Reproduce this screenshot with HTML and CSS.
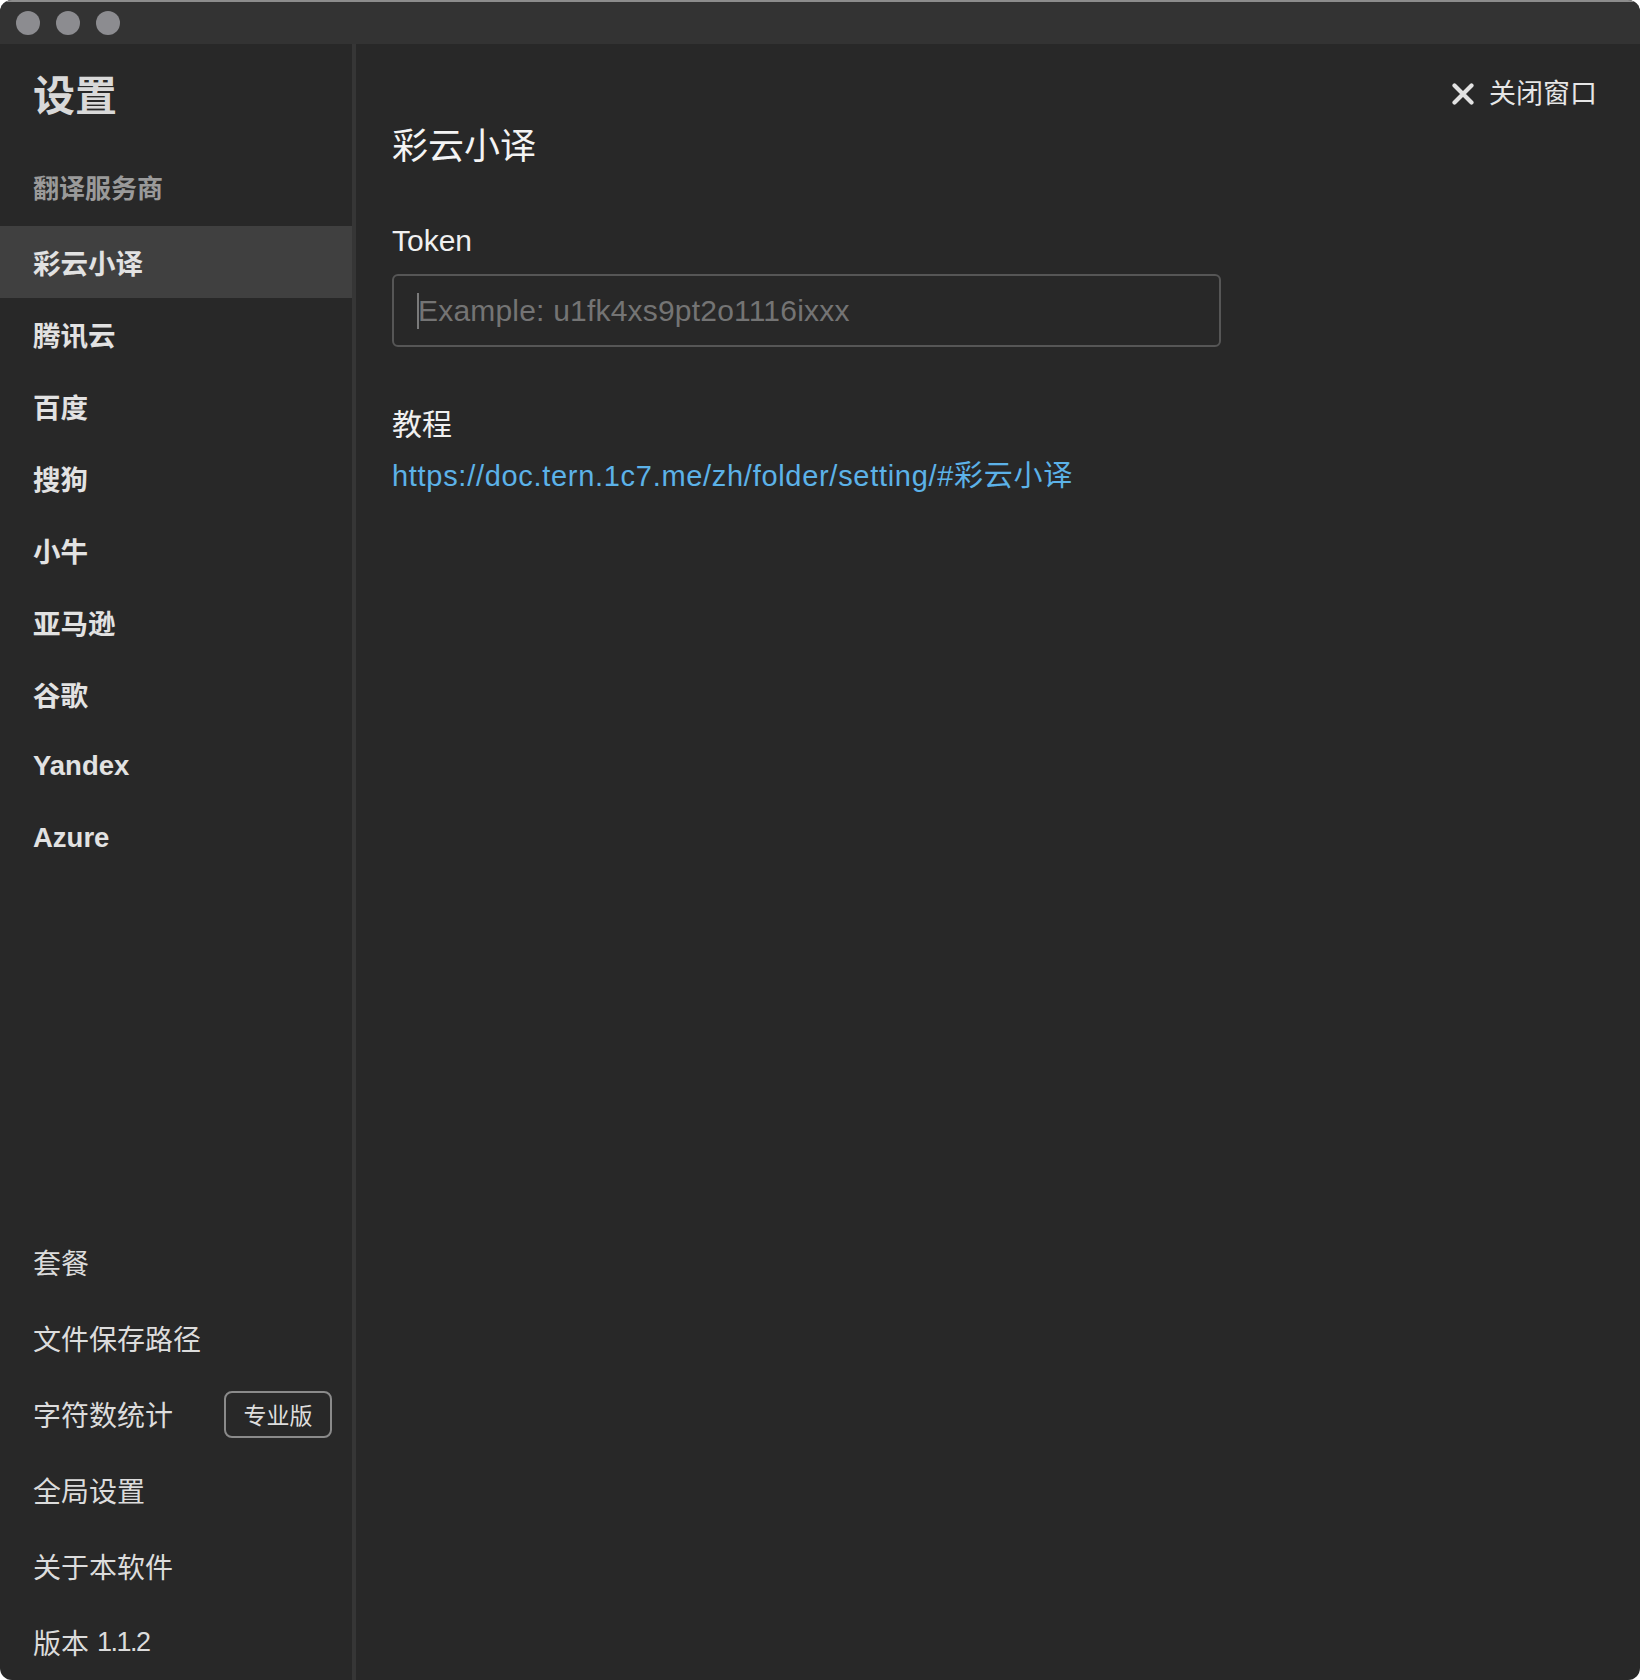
FILE: index.html
```html
<!DOCTYPE html>
<html lang="zh">
<head>
    <meta charset="UTF-8">
    <meta name="viewport" content="width=device-width, initial-scale=1.0">
    <title>设置</title>
    <link rel="stylesheet" href="styles.css">
</head>
<body>
    <div class="window">
        <!-- Title bar -->
        <div class="titlebar">
            <span class="light"></span>
            <span class="light"></span>
            <span class="light"></span>
        </div>

        <div class="body">
            <!-- Sidebar -->
            <aside class="sidebar">
                <h1>设置</h1>
                <div class="group-title">翻译服务商</div>
                <ul class="providers">
                    <li class="active">彩云小译</li>
                    <li>腾讯云</li>
                    <li>百度</li>
                    <li>搜狗</li>
                    <li>小牛</li>
                    <li>亚马逊</li>
                    <li>谷歌</li>
                    <li>Yandex</li>
                    <li>Azure</li>
                </ul>
                <ul class="extras">
                    <li>套餐</li>
                    <li>文件保存路径</li>
                    <li>字符数统计 <span class="badge">专业版</span></li>
                    <li>全局设置</li>
                    <li>关于本软件</li>
                    <li class="version">版本 <span class="num">1.1.2</span></li>
                </ul>
            </aside>

            <!-- Main panel -->
            <main class="main">
                <div class="close-row">
                    <button class="close">
                        <svg width="22" height="22" viewBox="0 0 22 22">
                            <path d="M2.5 2.5 L19.5 19.5 M19.5 2.5 L2.5 19.5" stroke="#e2e2e2" stroke-width="4.2" stroke-linecap="round"/>
                        </svg>
                        关闭窗口
                    </button>
                </div>
                <h2>彩云小译</h2>
                <label for="token">Token</label>
                <div class="field">
                    <input type="text" id="token" placeholder="Example: u1fk4xs9pt2o1116ixxx">
                </div>
                <div class="section-title">教程</div>
                <a class="link" href="#">https://doc.tern.1c7.me/zh/folder/setting/#彩云小译</a>
            </main>
        </div>
    </div>
</body>
</html>
```

FILE: styles.css
```css
body {
    margin: 0;
    padding: 0;
    background: #ffffff;
    font-family: 'Liberation Sans', 'Noto Sans CJK SC', sans-serif;
}

.window {
    width: 1640px;
    height: 1680px;
    border-radius: 12px;
    overflow: hidden;
    background: #282828;
    display: flex;
    flex-direction: column;
}

/* Title bar */
.titlebar {
    height: 44px;
    flex-shrink: 0;
    background: #333333;
    border-top: 2px solid #8c8c8c;
    box-sizing: border-box;
    display: flex;
    align-items: center;
    gap: 16px;
    padding-left: 16px;
}

.light {
    width: 24px;
    height: 24px;
    border-radius: 50%;
    background: #8c8c90;
}

.body {
    flex: 1;
    display: flex;
}

/* Sidebar */
.sidebar {
    width: 352px;
    border-right: 4px solid #363636;
    display: flex;
    flex-direction: column;
    color: #e4e4e4;
}

.sidebar h1 {
    margin: 32px 0 0 33px;
    font-size: 42px;
    line-height: 42px;
    font-weight: 700;
    color: #d9d9d9;
}

.group-title {
    margin: 58px 0 24px 33px;
    font-size: 26px;
    line-height: 26px;
    font-weight: 700;
    color: #9a9a9a;
}

.sidebar ul {
    list-style: none;
    margin: 0;
    padding: 0;
}

.providers li {
    height: 72px;
    display: flex;
    align-items: center;
    padding-left: 33px;
    font-size: 27.5px;
    font-weight: 700;
    color: #e2e2e2;
}

.providers li.active {
    background: #404040;
}

.extras {
    margin-top: auto !important;
}

.extras li {
    height: 76px;
    display: flex;
    align-items: center;
    padding: 0 20px 0 33px;
    font-size: 28px;
    color: #dcdcdc;
}

.extras li .num {
    margin-left: 8px;
    font-size: 27px;
    letter-spacing: -1.5px;
}

.badge {
    margin-left: auto;
    width: 108px;
    height: 47px;
    box-sizing: border-box;
    border: 2px solid #8a8a8a;
    border-radius: 8px;
    display: flex;
    align-items: center;
    justify-content: center;
    font-size: 23px;
    color: #dedede;
}

/* Main panel */
.main {
    flex: 1;
    padding: 0 43px 0 36px;
    display: flex;
    flex-direction: column;
    align-items: flex-start;
    color: #f2f2f2;
}

.close-row {
    align-self: stretch;
    display: flex;
    justify-content: flex-end;
    padding-top: 36px;
}

.close {
    background: none;
    border: none;
    padding: 0;
    display: flex;
    align-items: center;
    gap: 15px;
    font-family: inherit;
    font-size: 27px;
    line-height: 28px;
    color: #e6e6e6;
    cursor: pointer;
}

.main h2 {
    margin: 21px 0 0 0;
    font-size: 36px;
    line-height: 36px;
    font-weight: 400;
    color: #f4f4f4;
}

.main label {
    margin-top: 61px;
    font-size: 30px;
    line-height: 30px;
    color: #f0f0f0;
}

.field {
    position: relative;
    margin-top: 18px;
}

/* fake text caret */
.field::before {
    content: "";
    position: absolute;
    left: 25px;
    top: 19px;
    width: 2px;
    height: 36px;
    background: #7a7a7a;
}

.field input {
    display: block;
    width: 829px;
    height: 73px;
    box-sizing: border-box;
    background: #282828;
    border: 2px solid #565656;
    border-radius: 6px;
    padding: 0 22px 0 24px;
    font-family: inherit;
    font-size: 30px;
    letter-spacing: 0.2px;
    color: #e0e0e0;
    outline: none;
}

.field input::placeholder {
    color: #747474;
}

.section-title {
    margin-top: 63px;
    font-size: 30px;
    line-height: 30px;
    color: #f0f0f0;
}

.link {
    margin-top: 21px;
    font-size: 29px;
    line-height: 30px;
    letter-spacing: 0.7px;
    color: #5cb2e8;
    text-decoration: none;
}
```
